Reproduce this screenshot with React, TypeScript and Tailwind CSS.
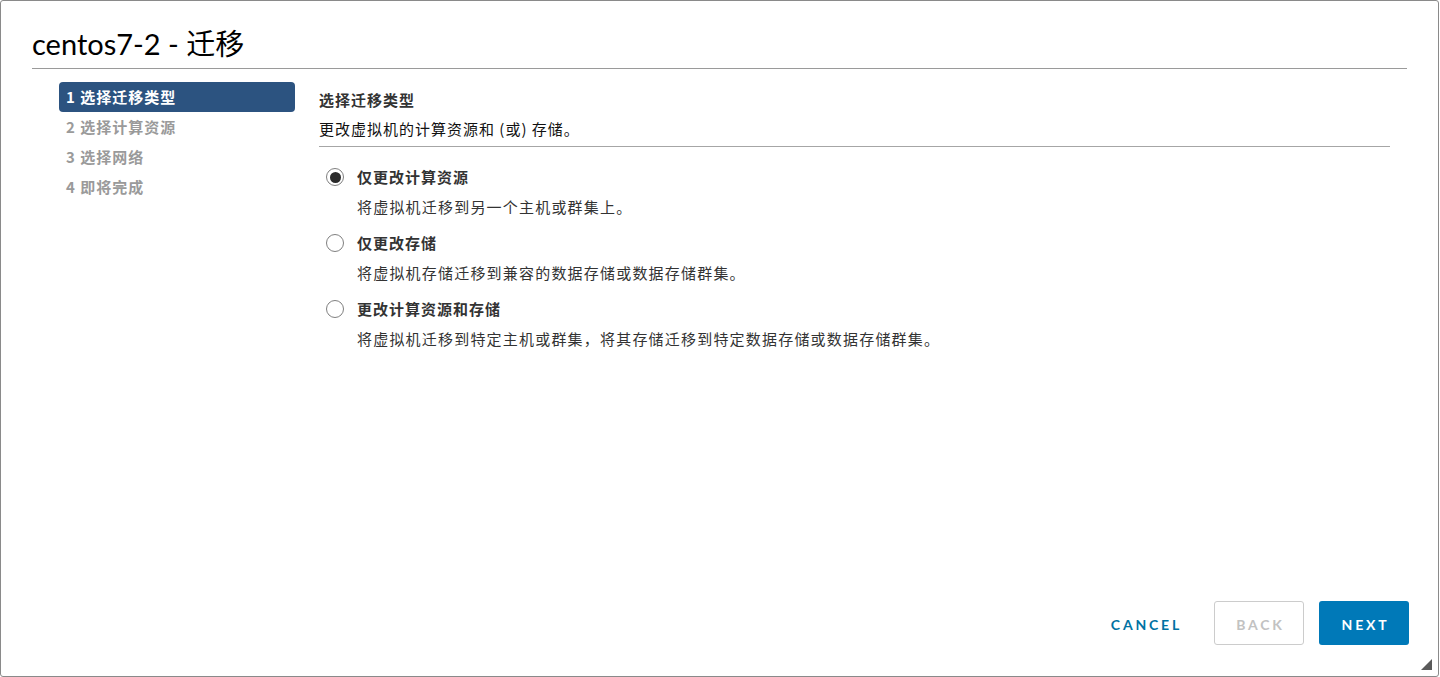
import React from 'react';

const steps = ['1 选择迁移类型', '2 选择计算资源', '3 选择网络', '4 即将完成'];

const options = [
  { label: '仅更改计算资源', desc: '将虚拟机迁移到另一个主机或群集上。' },
  { label: '仅更改存储', desc: '将虚拟机存储迁移到兼容的数据存储或数据存储群集。' },
  { label: '更改计算资源和存储', desc: '将虚拟机迁移到特定主机或群集，将其存储迁移到特定数据存储或数据存储群集。' },
];

const cjk = '"Microsoft YaHei", "Noto Sans CJK SC", sans-serif';
const latin = 'Lato, "Noto Sans CJK SC", sans-serif';

function Radio({ checked }: { checked: boolean }) {
  return (
    <span className="flex h-[18px] w-[18px] shrink-0 items-center justify-center rounded-full border-[1.5px] border-[#7f7f7f] bg-white">
      {checked && <span className="h-[11px] w-[11px] rounded-full bg-[#2a2a2a]" />}
    </span>
  );
}

export default function App() {
  return (
    <div className="h-[677px] w-[1440px] bg-white">
      <div className="relative flex h-[677px] w-[1439px] flex-col rounded-[3px] border border-[#8a8a8a] bg-white">
        {/* header */}
        <div className="px-[31px] pt-[25px]">
          <div
            className="border-b border-[#9a9a9a] pb-[7px] text-[29px] leading-[35px] text-[#000]"
            style={{ fontFamily: latin }}
          >
            centos7-2 - 迁移
          </div>
        </div>

        {/* body */}
        <div className="flex flex-1 pl-[58px] pr-[48px] pt-[13px]" style={{ fontFamily: cjk }}>
          <div className="flex w-[236px] shrink-0 flex-col">
            {steps.map((s, i) => (
              <div
                key={s}
                className={`h-[30px] rounded-[4px] pl-[7px] text-[15px] font-bold leading-[30px] tracking-[1px] ${
                  i === 0 ? 'bg-[#2c5380] text-white' : 'text-[#9a9a9a]'
                }`}
              >
                {s}
              </div>
            ))}
          </div>

          <div className="ml-[24px] flex-1 pt-[8px]">
            <div className="border-b border-[#a6a6a6] pb-[7px]">
              <div className="text-[15px] font-semibold leading-[20px] tracking-[1px] text-[#333]">选择迁移类型</div>
              <div className="mt-[9px] text-[15px] leading-[20px] tracking-[1px] text-[#111]">更改虚拟机的计算资源和 (或) 存储。</div>
            </div>

            <div className="pl-[7px] pt-[20px]">
              {options.map((o, i) => (
                <div key={o.label} className="mb-[16px]">
                  <div className="flex items-center gap-[13px]">
                    <Radio checked={i === 0} />
                    <span className="text-[15px] font-bold leading-[20px] tracking-[1px] text-[#333]">{o.label}</span>
                  </div>
                  <div className="mt-[10px] pl-[31px] text-[15px] leading-[20px] tracking-[1.2px] text-[#333]">{o.desc}</div>
                </div>
              ))}
            </div>
          </div>
        </div>

        {/* footer */}
        <div
          className="flex items-center justify-end gap-[15px] pb-[31px] pr-[29px]"
          style={{ fontFamily: latin }}
        >
          <button className="mr-[17px] h-[44px] pt-[2px] text-[14px] font-bold tracking-[0.2em] text-[#0072a3]">
            CANCEL
          </button>
          <button className="h-[44px] w-[90px] rounded-[3px] border border-[#cccccc] bg-white pl-[3px] pt-[2px] text-[14px] font-bold tracking-[0.2em] text-[#c2c2c2]">
            BACK
          </button>
          <button className="h-[44px] w-[90px] rounded-[3px] bg-[#0079b8] pl-[3px] pt-[2px] text-[14px] font-bold tracking-[0.2em] text-white">
            NEXT
          </button>
        </div>

        {/* resize handle */}
        <svg className="absolute bottom-[6px] right-[6px]" width="12" height="12" viewBox="0 0 12 12">
          <path d="M12 1 L1 12 L12 12 Z" fill="#5a5a5a" />
        </svg>
      </div>
    </div>
  );
}
